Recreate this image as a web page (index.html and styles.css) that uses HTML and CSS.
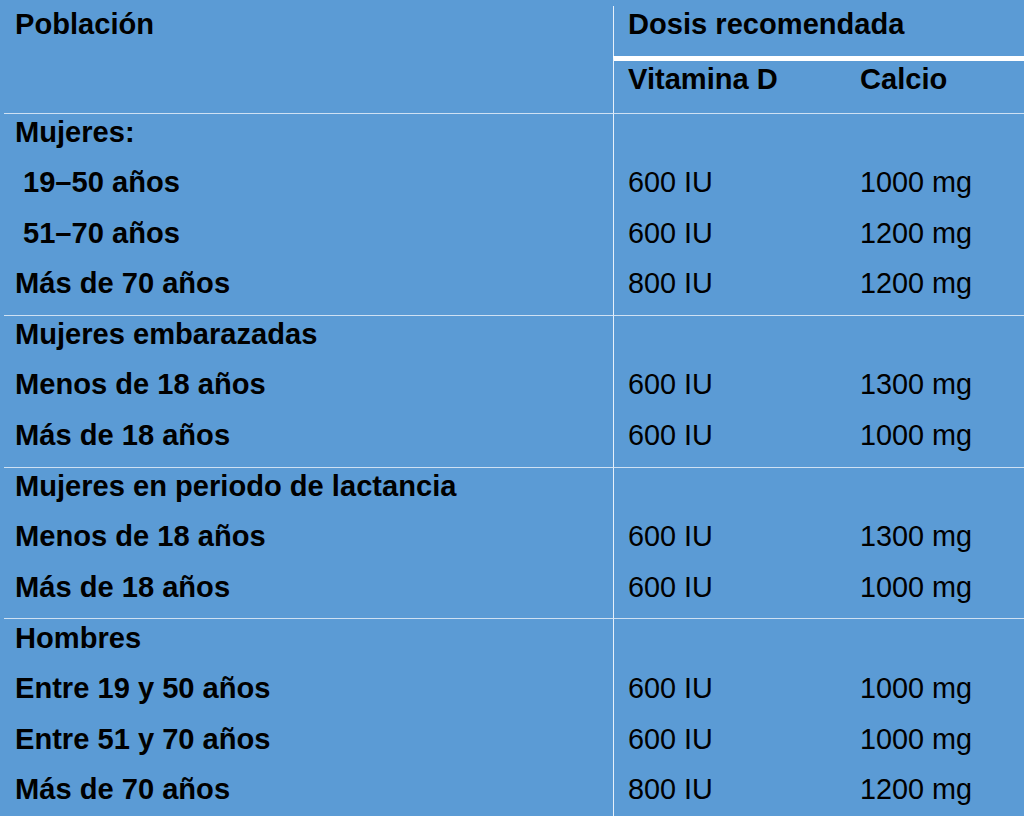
FILE: index.html
```html
<!DOCTYPE html>
<html lang="es">
<head>
<meta charset="utf-8">
<title>Dosis recomendada de vitamina D y calcio</title>
<link rel="stylesheet" href="styles.css">
</head>
<body>
<table class="dose-table">
  <colgroup>
    <col class="c-pop">
    <col class="c-vit">
    <col class="c-cal">
  </colgroup>
  <thead>
    <tr class="h1">
      <th rowspan="2" class="pop">Población</th>
      <th colspan="2" class="dose">Dosis recomendada</th>
    </tr>
    <tr class="h2">
      <th class="vit">Vitamina D</th>
      <th class="cal">Calcio</th>
    </tr>
  </thead>
  <tbody>
    <tr><th>Mujeres:</th><td class="vit"></td><td class="cal"></td></tr>
    <tr><th class="indent">19–50 años</th><td class="vit">600 IU</td><td class="cal">1000 mg</td></tr>
    <tr><th class="indent">51–70 años</th><td class="vit">600 IU</td><td class="cal">1200 mg</td></tr>
    <tr><th>Más de 70 años</th><td class="vit">800 IU</td><td class="cal">1200 mg</td></tr>
  </tbody>
  <tbody>
    <tr><th>Mujeres embarazadas</th><td class="vit"></td><td class="cal"></td></tr>
    <tr><th>Menos de 18 años</th><td class="vit">600 IU</td><td class="cal">1300 mg</td></tr>
    <tr><th>Más de 18 años</th><td class="vit">600 IU</td><td class="cal">1000 mg</td></tr>
  </tbody>
  <tbody>
    <tr><th>Mujeres en periodo de lactancia</th><td class="vit"></td><td class="cal"></td></tr>
    <tr><th>Menos de 18 años</th><td class="vit">600 IU</td><td class="cal">1300 mg</td></tr>
    <tr><th>Más de 18 años</th><td class="vit">600 IU</td><td class="cal">1000 mg</td></tr>
  </tbody>
  <tbody>
    <tr><th>Hombres</th><td class="vit"></td><td class="cal"></td></tr>
    <tr><th>Entre 19 y 50 años</th><td class="vit">600 IU</td><td class="cal">1000 mg</td></tr>
    <tr><th>Entre 51 y 70 años</th><td class="vit">600 IU</td><td class="cal">1000 mg</td></tr>
    <tr><th>Más de 70 años</th><td class="vit">800 IU</td><td class="cal">1200 mg</td></tr>
  </tbody>
</table>
</body>
</html>
```

FILE: styles.css
```css
html, body {
  margin: 0;
  padding: 0;
  background: #5b9bd5;
  overflow: hidden;
}

body {
  font-family: "Liberation Sans", Arial, sans-serif;
  color: #000;
}

.dose-table {
  border-collapse: separate;
  border-spacing: 0;
  table-layout: fixed;
  width: 1020px;
  margin: 6px 0 0 4px;
  font-size: 28.8px;
  line-height: 32px;
}

.c-pop { width: 609px; }
.c-vit { width: 233px; }
.c-cal { width: 178px; }

.dose-table th,
.dose-table td {
  vertical-align: top;
  text-align: left;
  padding: 2px 0 0 11px;
  white-space: nowrap;
}

.dose-table th {
  font-weight: bold;
  font-size: 29.1px;
}

.dose-table td { font-weight: normal; }

.dose-table .vit,
.dose-table .dose {
  border-left: 1px solid #e6f0fa;
  padding-left: 14px;
}

.dose-table .cal {
  padding-left: 14px;
}

.dose-table .indent {
  padding-left: 19px;
}

.h1 { height: 50px; }
.h2 { height: 56.5px; }

.h2 th {
  border-top: 5px solid #fff;
}

.dose-table tbody tr { height: 50.6px; }

.dose-table tbody th,
.dose-table tbody td {
  padding-top: 3px;
}

.dose-table tbody tr:first-child > * {
  border-top: 1px solid #cfe1f3;
  padding-top: 2.5px;
}
```
